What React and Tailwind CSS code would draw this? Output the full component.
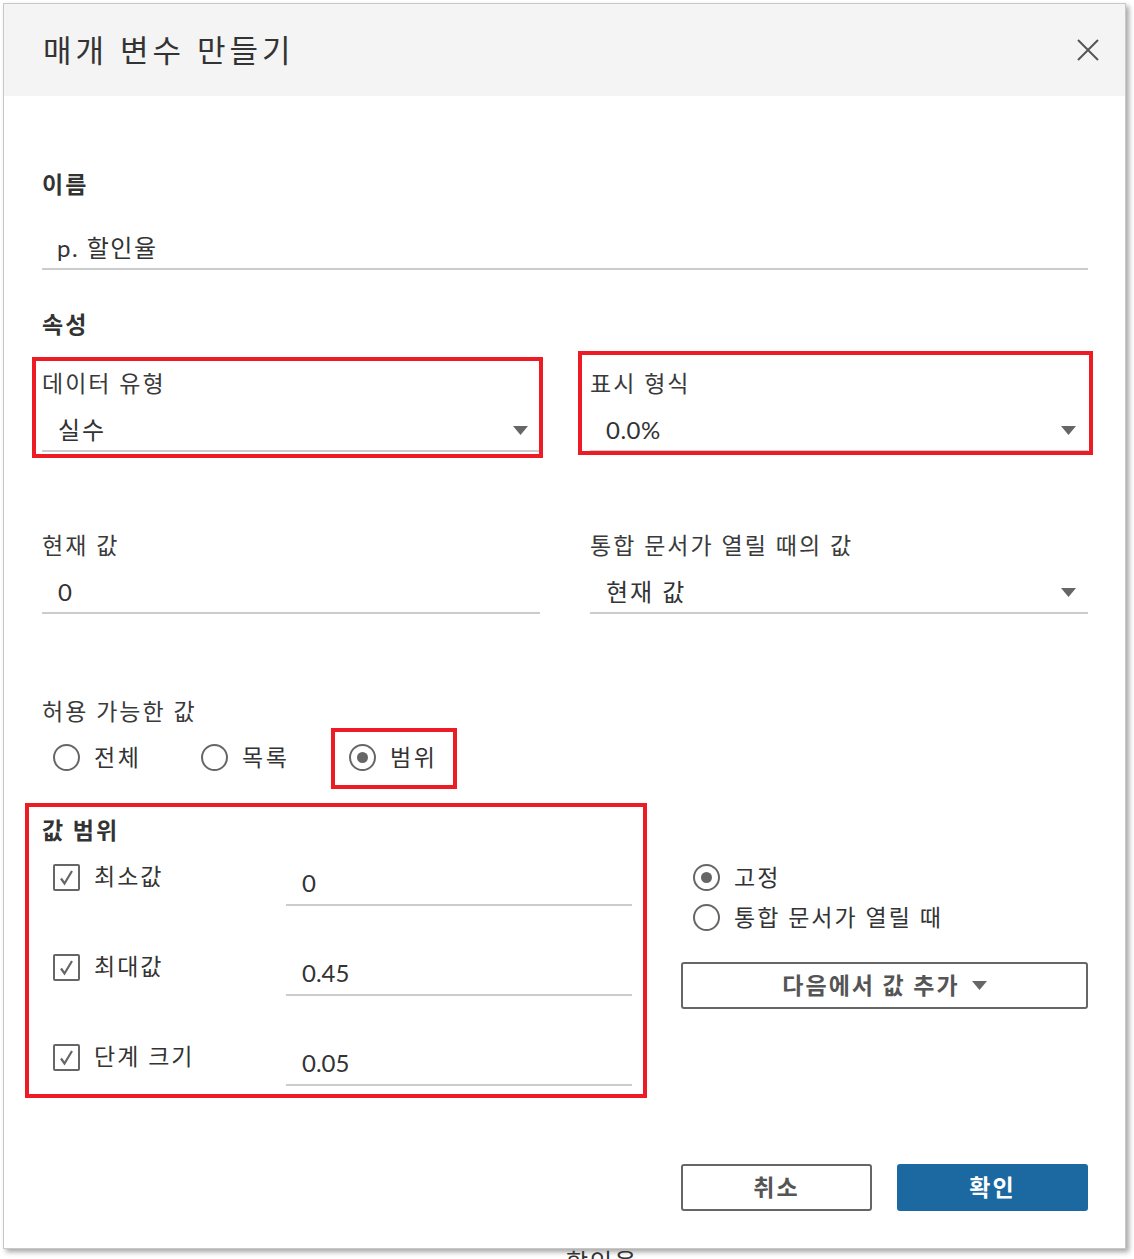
import React from 'react';

const Caret = () => (
  <svg width="15" height="9" viewBox="0 0 15 9" className="shrink-0">
    <path d="M0 0h15L7.5 9z" fill="#666" />
  </svg>
);

const Radio = ({ checked }) => (
  <span className="flex h-[27px] w-[27px] shrink-0 items-center justify-center rounded-full border-2 border-[#666]">
    {checked && <span className="h-[11px] w-[11px] rounded-full bg-[#666]" />}
  </span>
);

const Checkbox = () => (
  <span className="flex h-[27px] w-[27px] shrink-0 items-center justify-center rounded-[2px] border-2 border-[#666]">
    <svg width="17" height="17" viewBox="0 0 17 17">
      <path d="M3 9.5l3.5 5L14 2" fill="none" stroke="#666" strokeWidth="2.2" />
    </svg>
  </span>
);

const RedBox = ({ className }) => (
  <div className={`pointer-events-none absolute border-4 border-[#ed1c24] ${className}`} />
);

const Field = ({ label, value, select, ko }) => (
  <div>
    <div className="h-[32px] text-[23px] leading-[32px] tracking-[2px] text-[#3a3a3a]">{label}</div>
    <div className="mt-[11px] flex h-[42px] items-center justify-between border-b-2 border-[#cccccc] pl-4 pr-3">
      <span className={`text-[24px] text-[#333] ${ko ? 'tracking-[2px]' : 'tracking-[0.5px]'}`}>{value}</span>
      {select && <Caret />}
    </div>
  </div>
);

const RangeRow = ({ label, value }) => (
  <div className="flex h-[90px] items-start">
    <div className="flex w-[244px] items-start gap-[14px] pl-[11px]">
      <span className="mt-[2px]">
        <Checkbox />
      </span>
      <span className="text-[23px] leading-[28px] tracking-[2px] text-[#333]">{label}</span>
    </div>
    <div className="flex h-[44px] w-[346px] items-center border-b-2 border-[#cccccc] pl-4">
      <span className="text-[24px] text-[#333]">{value}</span>
    </div>
  </div>
);

export default function App() {
  return (
    <div className="h-[1259px] overflow-hidden bg-white font-['Lato','Noto_Sans_CJK_KR',sans-serif] text-[#333]">
      <div className="ml-[3px] mt-[3px] w-[1123px] border border-[#c8c8c8] bg-white shadow-[3px_3px_5px_rgba(0,0,0,0.35)]">
        {/* header */}
        <div className="flex h-[92px] items-center justify-between bg-[#f4f4f4] pl-[39px] pr-[26px]">
          <h1 className="text-[31px] font-normal tracking-[4px] text-[#333]">매개 변수 만들기</h1>
          <svg width="22" height="22" viewBox="0 0 22 22">
            <path d="M1 1l20 20M21 1L1 21" stroke="#555" strokeWidth="2" />
          </svg>
        </div>

        <div className="pb-[37px] pl-[38px] pr-[37px] pt-[72px]">
          <div className="h-[32px] text-[23px] font-bold leading-[32px] tracking-[2px]">이름</div>
          <div className="mt-[28px] flex h-[42px] items-center border-b-2 border-[#cccccc] pl-[15px]">
            <span className="text-[24px] tracking-[1.5px]">p. 할인율</span>
          </div>

          <div className="mt-[38px] h-[32px] text-[23px] font-bold leading-[32px] tracking-[2px]">속성</div>
          <div className="mt-[27px] grid grid-cols-2 gap-[50px]">
            <div className="relative">
              <RedBox className="-left-[10px] -top-[10px] h-[101px] w-[511px]" />
              <Field label="데이터 유형" value="실수" select ko />
            </div>
            <div className="relative">
              <RedBox className="-left-[12px] -top-[16px] h-[104px] w-[515px]" />
              <Field label="표시 형식" value="0.0%" select />
            </div>
          </div>

          <div className="mt-[77px] grid grid-cols-2 gap-[50px]">
            <Field label="현재 값" value="0" />
            <Field label="통합 문서가 열릴 때의 값" value="현재 값" select ko />
          </div>

          <div className="mt-[81px] h-[32px] text-[23px] leading-[32px] tracking-[2px] text-[#3a3a3a]">허용 가능한 값</div>
          <div className="mt-[10px] flex h-[40px] items-center">
            {['전체', '목록', '범위'].map((t, i) => (
              <div key={t} className="relative flex w-[148px] items-center gap-[14px] pl-[11px]">
                {i === 2 && <RedBox className="-top-[12px] -left-[7px] h-[61px] w-[126px]" />}
                <Radio checked={i === 2} />
                <span className="text-[23px] tracking-[2.5px]">{t}</span>
              </div>
            ))}
          </div>

          <div className="relative mt-[37px]">
            <RedBox className="-left-[17px] -top-[11px] h-[295px] w-[622px]" />
            <div className="h-[32px] text-[23px] font-bold leading-[32px] tracking-[2px]">값 범위</div>
            <div className="mt-[16px] flex gap-[49px]">
              <div className="w-[590px]">
                <RangeRow label="최소값" value="0" />
                <RangeRow label="최대값" value="0.45" />
                <div className="h-[44px] overflow-visible">
                  <RangeRow label="단계 크기" value="0.05" />
                </div>
              </div>
              <div className="flex-1">
                <div className="flex h-[30px] items-center gap-[14px] pl-[12px]">
                  <Radio checked />
                  <span className="text-[23px] tracking-[2px]">고정</span>
                </div>
                <div className="mt-[10px] flex h-[30px] items-center gap-[14px] pl-[12px]">
                  <Radio />
                  <span className="text-[23px] tracking-[2px]">통합 문서가 열릴 때</span>
                </div>
                <button className="mt-[30px] flex h-[47px] w-full items-center justify-center gap-3 rounded-[3px] border-2 border-[#666] bg-white text-[23px] font-bold tracking-[2px] text-[#555]">
                  다음에서 값 추가
                  <Caret />
                </button>
              </div>
            </div>
          </div>

          <div className="mt-[78px] flex justify-end gap-[25px]">
            <button className="h-[47px] w-[191px] rounded-[3px] border-2 border-[#666] bg-white text-[23px] font-bold tracking-[2px] text-[#555]">
              취소
            </button>
            <button className="h-[47px] w-[191px] rounded-[3px] bg-[#1b69a0] text-[23px] font-bold tracking-[2px] text-white">
              확인
            </button>
          </div>
        </div>
      </div>
      <div className="ml-[566px] mt-[1px] text-[24px] leading-[24px] tracking-[2px] text-[#333]">할인율</div>
    </div>
  );
}
